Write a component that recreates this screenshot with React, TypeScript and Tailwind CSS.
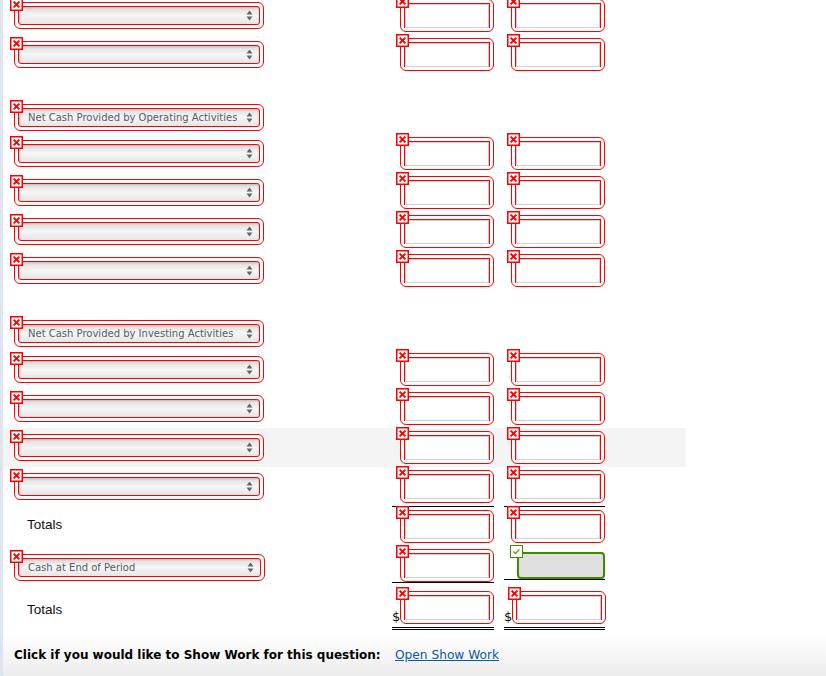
import React from "react";

const XBadge = () => (
  <span className="absolute -left-[5px] -top-[5px] z-10 flex h-[13px] w-[13px] items-center justify-center bg-white shadow-[inset_0_0_0_1.5px_#ff0000]">
    <svg viewBox="0 0 9 9" className="h-[9px] w-[9px] shrink-0">
      <path d="M1.6 1.6 L7.4 7.4 M7.4 1.6 L1.6 7.4" stroke="#ff0000" strokeWidth="2" />
    </svg>
  </span>
);

const CheckBadge = () => (
  <span className="absolute -left-[9px] -top-[9px] z-10 flex h-[13px] w-[13px] items-center justify-center border border-[#3f8a00] bg-white">
    <svg viewBox="0 0 9 9" className="h-[9px] w-[9px]">
      <path d="M1.5 4.5 L3.5 6.5 L7.5 2.5" stroke="#5aa02c" strokeWidth="1.3" fill="none" />
    </svg>
  </span>
);

const SelectBox = ({ label, className = "w-[250px]" }: { label?: string; className?: string }) => (
  <div className={`relative h-[27px] rounded-[6px] border border-[#ff0000] bg-white p-[3px] ${className}`}>
    <XBadge />
    <div className="flex h-full items-center justify-between rounded-[3px] border border-[#ff0000] bg-gradient-to-b from-[#dedede] via-[#f6f6f6] to-[#e6e6e6] pl-[9px] pr-[6px] shadow-[inset_1px_1px_2px_#bbb]">
      <span className="truncate font-['DejaVu_Sans',sans-serif] text-[10px] leading-none text-[#555c63]">{label}</span>
      <svg viewBox="0 0 7 11" className="h-[11px] w-[7px] shrink-0">
        <path d="M3.5 0.5 L6.5 4.5 H0.5 Z M3.5 10.5 L6.5 6.5 H0.5 Z" fill="#666" />
      </svg>
    </div>
  </div>
);

const InputBox = () => (
  <div className="relative h-[33px] w-[94px] shrink-0 rounded-[6px] border border-[#ff0000] bg-white p-[3px]">
    <XBadge />
    <div className="h-full border-t border-r border-l border-[#ff0000] bg-white">
      <div className="h-full border border-[#d0d0d0]" />
    </div>
  </div>
);

const GreenBox = () => (
  <div className="relative ml-[13px] h-[27px] w-[88px] rounded-[4px] border-2 border-[#3f8a00] bg-[#e0e0e0]">
    <CheckBadge />
  </div>
);

const Totals = ({ className }: { className: string }) => (
  <div className={`pl-[24px] font-['Liberation_Sans',sans-serif] text-[13.5px] leading-none text-[#111] ${className}`}>Totals</div>
);

const Heading = ({ label }: { label: string }) => (
  <div className="h-[36px] pl-[11px] pt-[6px]">
    <SelectBox label={label} />
  </div>
);

const Line = ({ extra = "" }: { extra?: string }) => (
  <div className={`flex h-[39px] pt-[3px] ${extra}`}>
    <div className="w-[389px] pl-[11px] pt-[3px]">
      <SelectBox />
    </div>
    <div className="w-[102px] pl-[8px]">
      <InputBox />
    </div>
    <div className="ml-[10px] w-[101px] pl-[7px]">
      <InputBox />
    </div>
  </div>
);

const Dollar = () => (
  <span className="w-[8px] font-['DejaVu_Sans',sans-serif] text-[13px] leading-[14px] text-[#111]">$</span>
);

export default function App() {
  return (
    <div className="relative h-[676px] w-[826px] overflow-hidden bg-white">
      <div className="flex h-full flex-col border-l-[3px] border-[#dfe5ee] bg-gradient-to-b from-white from-[94%] to-[#ececec]">
        <div className="-mt-[4px]">
          <Line />
          <Line />
          <div className="h-[24px]" />
          <Heading label="Net Cash Provided by Operating Activities" />
          <Line />
          <Line />
          <Line />
          <Line />
          <div className="h-[24px]" />
          <Heading label="Net Cash Provided by Investing Activities" />
          <Line />
          <Line />
          <Line extra="w-[683px] bg-[#f4f4f4]" />
          <Line />

          {/* totals + cash rows carry the rule lines */}
          <div className="flex h-[40px]">
            <div className="w-[389px] pt-[12px]">
              <Totals className="" />
            </div>
            <div className="w-[102px] border-t border-black pl-[8px] pt-[3px]">
              <InputBox />
            </div>
            <div className="ml-[10px] w-[101px] border-t border-black pl-[7px] pt-[3px]">
              <InputBox />
            </div>
          </div>
          <div className="flex h-[42px]">
            <div className="w-[389px] pl-[11px] pt-[8px]">
              <SelectBox label="Cash at End of Period" className="w-[251px]" />
            </div>
            <div className="h-[37px] w-[102px] border-b border-black pl-[8px] pt-[3px]">
              <InputBox />
            </div>
            <div className="ml-[10px] h-[34px] w-[101px] border-b border-black pt-[6px]">
              <GreenBox />
            </div>
          </div>
          <div className="flex h-[42px]">
            <div className="w-[389px] pt-[15px]">
              <Totals className="" />
            </div>
            <div className="flex h-[42px] w-[102px] items-end border-b-[3px] border-double border-black pb-[3px]">
              <Dollar />
              <InputBox />
            </div>
            <div className="ml-[10px] flex h-[42px] w-[101px] items-end border-b-[3px] border-double border-black pb-[3px]">
              <Dollar />
              <InputBox />
            </div>
          </div>
        </div>

        <div className="mt-[19px] flex items-baseline whitespace-nowrap pl-[11px] font-['DejaVu_Sans',sans-serif] text-[12px] leading-none">
          <span className="w-[381px] font-bold text-black">Click if you would like to Show Work for this question:</span>
          <a href="#" className="text-[12.2px] text-[#0b5a9e] underline">Open Show Work</a>
        </div>
      </div>
    </div>
  );
}
